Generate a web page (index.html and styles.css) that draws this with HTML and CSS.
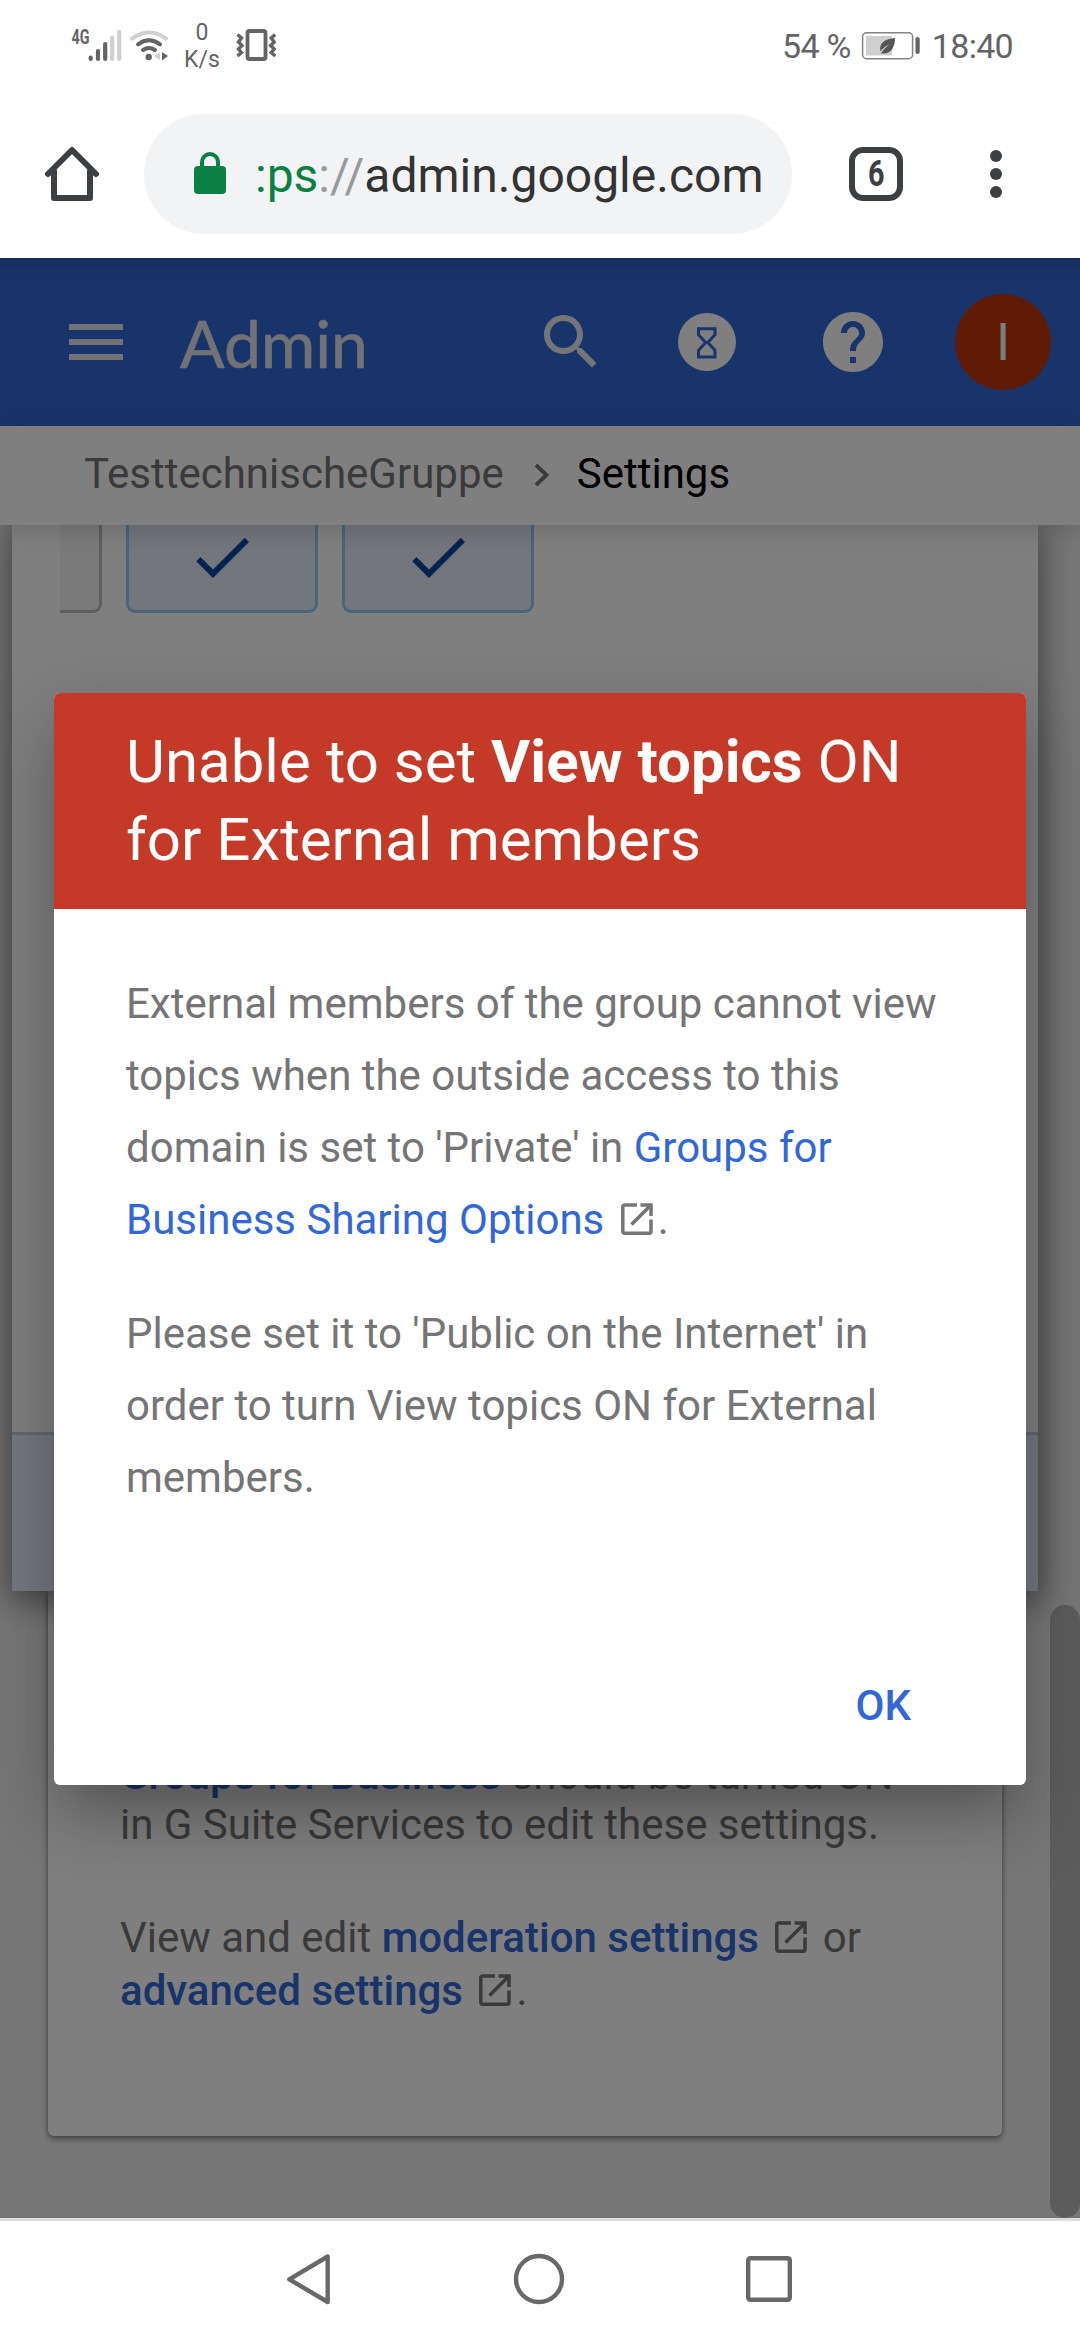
FILE: index.html
```html
<!DOCTYPE html>
<html lang="en">
<head>
<meta charset="utf-8">
<title>Admin</title>
<link rel="stylesheet" href="styles.css">
</head>
<body>
<svg class="defs" width="0" height="0" aria-hidden="true">
  <symbol id="ext" viewBox="0 0 32 32"><path d="M16 2H3.500a1.700 1.700 0 0 0-1.700 1.700v24.800a1.700 1.700 0 0 0 1.700 1.700h24.800a1.700 1.700 0 0 0 1.700-1.700V16.500" fill="none" stroke="currentColor" stroke-width="3.500"/><path d="M19.500 2H30v11M29.500 2.500L10.500 21.500" fill="none" stroke="currentColor" stroke-width="3.500"/></symbol>
  <symbol id="check" viewBox="0 0 24 24"><path d="M9 16.170L4.830 12l-1.420 1.410L9 19 21 7l-1.410-1.410z"/></symbol>
</svg>

<header class="status">
  <div class="status-left">
    <svg width="56" height="45" viewBox="66 18 56 45">
      <text class="net" x="71.500" y="43.500" textLength="18" lengthAdjust="spacingAndGlyphs">4G</text>
      <g stroke="#646464" stroke-width="4.200" stroke-linecap="round"><path d="M90.700 57.500v1.400M98 51v7.900M105.200 44v14.900"/><path stroke="#d0d0d0" d="M112.200 37.500v21.400M119.200 32v26.900"/></g>
    </svg>
    <svg class="wifi" width="40" height="36" viewBox="129 27 40 36">
      <g fill="none" stroke-width="4" stroke-linecap="round"><path stroke="#d0d0d0" d="M132 38.500q17-12 34 0"/><path stroke="#646464" d="M138 44.300q11-8 22 0M143 50q6-4 12 0"/></g>
      <circle cx="148.700" cy="57" r="3.200" fill="#646464"/><path d="M160 52v8l-6-4z" fill="#d0d0d0"/><path d="M162 52v8.500l6-4.500z" fill="#646464"/>
    </svg>
    <div class="speed"><span>0</span><span>K/s</span></div>
    <svg class="vibrate" width="42" height="34" viewBox="235 28 42 34" fill="none" stroke="#646464">
      <rect x="247.500" y="31" width="18" height="28" rx="2" stroke-width="3.800"/>
      <path stroke-width="3.400" d="M237.500 34.500l4 3.500-3 4 3.500 3.500-3.500 3.500 3 3.500-4 3.500M275.200 34.500l-4 3.500 3 4-3.500 3.500 3.500 3.500-3 3.500 4 3.500"/>
    </svg>
  </div>
  <div class="status-right">
    <span>54 %</span>
    <svg width="60" height="30" viewBox="861 31 60 30">
      <rect x="862.600" y="32.700" width="50" height="26" rx="4" fill="none" stroke="#848484" stroke-width="1.500"/>
      <path d="M866 36h26v19.500h-26z" fill="#cfcfcf"/>
      <path d="M895 38c0 9-4 15.500-11 15.500l-3 0c3-5 6-7 9-9.500-4 2-7.500 4-9.500 7.500-2-9 5-12.500 14.500-13.500z" fill="#555"/>
      <rect x="915.500" y="37" width="4.200" height="17" rx="2" fill="#646464"/>
    </svg>
    <span class="clock">18:40</span>
  </div>
</header>

<div class="browser">
  <svg width="54" height="56" viewBox="45 146 54 56" fill="none" stroke="#3c4043" stroke-width="6" stroke-linecap="round" stroke-linejoin="round"><path d="M48 174l24-24 24 24M54 171v27h36v-27"/></svg>
  <div class="omnibox">
    <svg width="32" height="44" viewBox="194 151 32 44"><rect x="194" y="166" width="32" height="28" rx="4" fill="#0b8043"/><path d="M202 168v-6a8 8 0 0 1 16 0v6" fill="none" stroke="#0b8043" stroke-width="4"/></svg>
    <div class="url"><span class="scheme">:ps</span><span class="sep">://</span><span class="host">admin.google.com</span></div>
  </div>
  <div class="tabs"><span>6</span></div>
  <svg class="dots" width="12" height="48" viewBox="0 0 12 48" fill="#3c4043"><circle cx="6" cy="6" r="6"/><circle cx="6" cy="24" r="6"/><circle cx="6" cy="42" r="6"/></svg>
</div>

<div class="viewport">
  <div class="appbar">
    <svg width="54" height="36" viewBox="0 0 54 36"><path d="M0 0h54v6H0zM0 15h54v6H0zM0 30h54v6H0z" fill="#e0e4ec"/></svg>
    <span class="brand">Admin</span>
    <svg class="search" width="72" height="72" viewBox="0 0 24 24" fill="#e6eaf2"><path d="M15.500 14h-.790l-.280-.270C15.410 12.590 16 11.110 16 9.500 16 5.910 13.090 3 9.500 3S3 5.910 3 9.500 5.910 16 9.500 16c1.610 0 3.090-.590 4.230-1.570l.270.280v.790l5 4.990L20.490 19l-4.990-5zm-6 0C7.010 14 5 11.990 5 9.500S7.010 5 9.500 5 14 7.010 14 9.500 11.990 14 9.500 14z"/></svg>
    <svg class="hourglass" width="58" height="58" viewBox="677 313 58 58"><circle cx="706" cy="342" r="29" fill="#fff"/><path d="M697.500 328.700h16.500v6l-7.200 7.800 7.200 7.800v6.700h-16.500v-6.700l7.200-7.800-7.200-7.800z" fill="none" stroke="#3367d6" stroke-width="3"/></svg>
    <svg class="help" width="60" height="60" viewBox="2 2 20 20" fill="#fff"><path d="M12 2C6.480 2 2 6.480 2 12s4.480 10 10 10 10-4.480 10-10S17.520 2 12 2zm1 17h-2v-2h2v2zm2.070-7.750l-.900.920C13.450 12.900 13 13.500 13 15h-2v-.500c0-1.100.450-2.100 1.170-2.830l1.240-1.260c.370-.360.590-.860.590-1.410 0-1.100-.900-2-2-2s-2 .900-2 2H8c0-2.210 1.790-4 4-4s4 1.790 4 4c0 .880-.360 1.680-.930 2.250z"/></svg>
    <div class="avatar">I</div>
  </div>
  <nav class="crumbs">
    <span>TesttechnischeGruppe</span>
    <svg width="16" height="24" viewBox="0 0 16 24" fill="none" stroke="#757575" stroke-width="3.800"><path d="M2 2l10.500 10L2 22"/></svg>
    <span class="current">Settings</span>
  </nav>
  <main class="content">
    <section class="panel">
      <div class="cells">
        <div class="cell off"></div>
        <div class="cell on"><svg width="72" height="72"><use href="#check"/></svg></div>
        <div class="cell on"><svg width="72" height="72"><use href="#check"/></svg></div>
      </div>
      <div class="actions"></div>
    </section>
    <section class="card">
      <p><b>Groups for Business</b> should be turned ON<br>in G Suite Services to edit these settings.</p>
      <p class="links">View and edit <b>moderation settings</b> <svg class="ext"><use href="#ext"/></svg> or<br><b>advanced settings</b> <svg class="ext"><use href="#ext"/></svg>.</p>
    </section>
  </main>
  <div class="track"><div class="thumb"></div></div>
  <div class="scrim">
    <div class="dialog" role="dialog">
      <h1>Unable to set <b>View topics</b> ON<br>for External members</h1>
      <div class="message">
        <p>External members of the group cannot view<br>topics when the outside access to this<br>domain is set to 'Private' in <a>Groups for<br>Business Sharing Options</a> <svg class="ext"><use href="#ext"/></svg>.</p>
        <p>Please set it to 'Public on the Internet' in<br>order to turn View topics ON for External<br>members.</p>
      </div>
      <div class="buttons"><span class="ok">OK</span></div>
    </div>
  </div>
</div>

<footer class="navbar">
  <svg width="46" height="52" viewBox="286 2253 46 52" fill="none" stroke="#686868" stroke-width="4.400" stroke-linejoin="round"><path d="M327.700 2256.500v45.500L289.300 2279.300z"/></svg>
  <svg width="52" height="52" viewBox="0 0 52 52" fill="none" stroke="#686868" stroke-width="4.400"><circle cx="26" cy="26" r="23"/></svg>
  <svg width="46" height="46" viewBox="0 0 46 46" fill="none" stroke="#686868" stroke-width="4.400"><rect x="2.200" y="2.200" width="41.600" height="41.600" rx="2"/></svg>
</footer>
</body>
</html>
```

FILE: styles.css
```css
* { box-sizing: border-box; }
body {
  margin: 0;
  width: 1080px;
  height: 2340px;
  overflow: hidden;
  background: #fff;
  font-family: Roboto, sans-serif;
  display: flex;
  flex-direction: column;
}
svg { flex: none; display: block; }
.defs { position: absolute; }
p, h1 { margin: 0; }

/* System status bar */
.status {
  height: 90px;
  padding: 0 67px 0 66px;
  display: flex;
  justify-content: space-between;
  color: #646464;
}
.status-left { display: flex; padding-top: 18px; height: 90px; }
.net { font: 700 20px Roboto, sans-serif; fill: #646464; }
.wifi { margin: 9px 0 0 7px; }
.speed {
  width: 34px;
  margin: 1px 16px 0 16px;
  display: flex;
  flex-direction: column;
  align-items: center;
  font-size: 23px;
  line-height: 27px;
}
.vibrate { margin-top: 10px; }
.status-right {
  display: flex;
  align-items: center;
  height: 91px;
  font-size: 34px;
  letter-spacing: -.7px;
}
.status-right svg { margin: 0 11px 0 10px; }

/* Address bar */
.browser {
  height: 168px;
  padding: 24px 78px 24px 45px;
  display: flex;
  align-items: center;
}
.omnibox {
  width: 648px;
  height: 120px;
  margin: 0 57px 0 45px;
  padding: 0 33px 0 50px;
  border-radius: 60px;
  background: #f1f3f4;
  display: flex;
  align-items: center;
}
.omnibox svg { margin-top: -2px; }
.url { margin: 4px 0 0 29px; font-size: 48px; line-height: 60px; display: flex; white-space: nowrap; }
.scheme { color: #0b8043; }
.sep { color: #999; }
.host { color: #333; }
.tabs {
  width: 54px;
  height: 54px;
  border: 6px solid #3c4043;
  border-radius: 14px;
  color: #3c4043;
  display: flex;
  justify-content: center;
  align-items: center;
  font-size: 36px;
  font-weight: 700;
  margin-right: 87px;
}
.tabs span { transform: scaleX(.8); }

/* Page */
.viewport {
  position: relative;
  height: 1960px;
  overflow: hidden;
  background: #eee;
  display: flex;
  flex-direction: column;
}
.appbar {
  flex: none;
  height: 168px;
  padding-left: 69px;
  background: linear-gradient(rgba(0, 0, 0, .1), transparent 24px), #3367d6;
  display: flex;
  align-items: center;
}
.brand {
  font-family: Lato, sans-serif;
  font-size: 66px;
  line-height: 80px;
  margin: 1px 0 0 57px;
  width: 355px;
  color: #e0e4ec;
  -webkit-text-stroke: .6px #e0e4ec;
}
.hourglass { margin-left: 71px; }
.help { margin-left: 87px; }
.avatar {
  width: 96px;
  height: 96px;
  margin-left: 72px;
  border-radius: 50%;
  background: #bf360c;
  color: #fff;
  font-size: 52px;
  display: flex;
  justify-content: center;
  align-items: center;
}
.crumbs {
  flex: none;
  position: relative;
  z-index: 2;
  height: 99px;
  padding: 0 0 5px 84px;
  background: #fff;
  box-shadow: 0 6px 24px rgba(0, 0, 0, .16);
  display: flex;
  align-items: center;
  font-size: 42px;
  color: #757575;
}
.crumbs svg { margin: 4px 27px 0 30px; }
.current { color: #000; }
.content { flex: none; }
.panel {
  position: relative;
  z-index: 1;
  height: 1066px;
  margin: 0 42px 0 12px;
  background: #fff;
  box-shadow: 0 6px 30px 3px rgba(0, 0, 0, .38), 0 12px 36px rgba(0, 0, 0, .12);
  display: flex;
  flex-direction: column;
  justify-content: space-between;
}
.cells { display: flex; padding-left: 48px; gap: 24px; }
.cell {
  width: 192px;
  height: 88px;
  border: 3px solid #90caf9;
  border-top: 0;
  border-radius: 0 0 9px 9px;
  background: #e6ecfa;
  fill: #0d47a1;
  display: flex;
  justify-content: center;
}
.cell svg { margin-top: -4px; }
.off { width: 42px; background: #f5f5f5; border-color: #bdbdbd; border-left: 0; border-bottom-left-radius: 0; }
.actions { height: 159px; border-top: 3px solid #c5cfe0; background: #e8f0fe; }
.card {
  height: 545px;
  margin: 0 78px 0 48px;
  padding: 159px 72px 0;
  background: #fff;
  border-radius: 0 0 6px 6px;
  box-shadow: 0 3px 6px rgba(0, 0, 0, .4), 0 0 4px rgba(0, 0, 0, .2);
  font-size: 42px;
  line-height: 50px;
  color: #757575;
}
.card p { white-space: nowrap; }
.card b { font-weight: 500; color: #3367d6; }
.card .links { line-height: 53px; margin-top: 61px; }
.ext { display: inline-block; width: 32px; height: 32px; margin: 0 5px 0 6px; vertical-align: -1px; }
.track { position: absolute; inset: 267px 0 0 auto; width: 30px; background: rgba(255, 255, 255, .1); }
.thumb { height: 613px; margin-top: 1080px; border-radius: 15px; background: #b9b9b9; }

/* Modal */
.scrim {
  position: absolute;
  inset: 0;
  z-index: 5;
  padding: 435px 54px 0;
  background: rgba(0, 0, 0, .5);
}
.dialog {
  height: 1092px;
  border-radius: 6px;
  overflow: hidden;
  background: #fff;
  box-shadow: 0 33px 45px -21px rgba(0, 0, 0, .2), 0 30px 75px 9px rgba(0, 0, 0, .2);
  display: flex;
  flex-direction: column;
}
h1 {
  padding: 30px 72px;
  background: #c53929;
  color: #fff;
  font-size: 60px;
  font-weight: 400;
  line-height: 78px;
  white-space: nowrap;
}
h1 b { font-weight: 700; }
.message {
  padding: 59px 72px 0;
  display: flex;
  flex-direction: column;
  gap: 42px;
  font-size: 42px;
  line-height: 72px;
  color: #757575;
  white-space: nowrap;
}
.message a { color: #3367d6; }
.buttons { margin-top: auto; padding: 0 115px 54px; display: flex; justify-content: flex-end; }
.ok { font-size: 42px; line-height: 50px; font-weight: 500; color: #3367d6; }

/* System navigation */
.navbar {
  flex: 1;
  border-top: 3px solid #dcdcdc;
  padding: 0 288px 4px 286px;
  display: flex;
  align-items: center;
  justify-content: space-between;
}
```
